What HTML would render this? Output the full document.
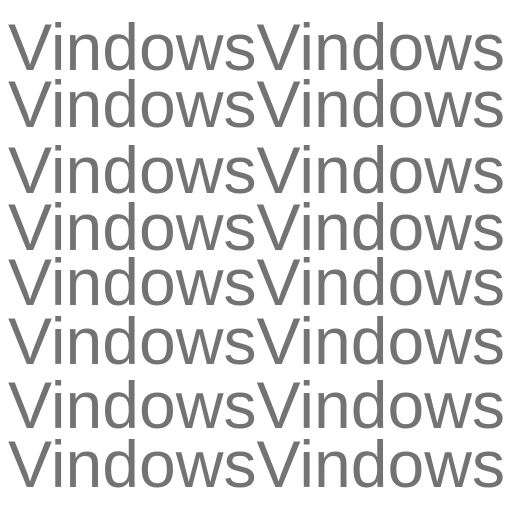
<!DOCTYPE html>
<html><head><style>html,body{margin:0;padding:0;background:#fff;width:512px;height:512px;overflow:hidden}</style></head>
<body>
<svg width="512" height="512" xmlns="http://www.w3.org/2000/svg" style="display:block">
<g font-family="Liberation Sans, sans-serif" font-size="66" fill="#737373">
<text x="8" y="70" textLength="497" lengthAdjust="spacingAndGlyphs">VindowsVindows</text>
<text x="8" y="127" textLength="497" lengthAdjust="spacingAndGlyphs">VindowsVindows</text>
<text x="8" y="193" textLength="497" lengthAdjust="spacingAndGlyphs">VindowsVindows</text>
<text x="8" y="250" textLength="497" lengthAdjust="spacingAndGlyphs">VindowsVindows</text>
<text x="8" y="305" textLength="497" lengthAdjust="spacingAndGlyphs">VindowsVindows</text>
<text x="8" y="364" textLength="497" lengthAdjust="spacingAndGlyphs">VindowsVindows</text>
<text x="8" y="428" textLength="497" lengthAdjust="spacingAndGlyphs">VindowsVindows</text>
<text x="8" y="487" textLength="497" lengthAdjust="spacingAndGlyphs">VindowsVindows</text>
</g>
</svg>
</body></html>
